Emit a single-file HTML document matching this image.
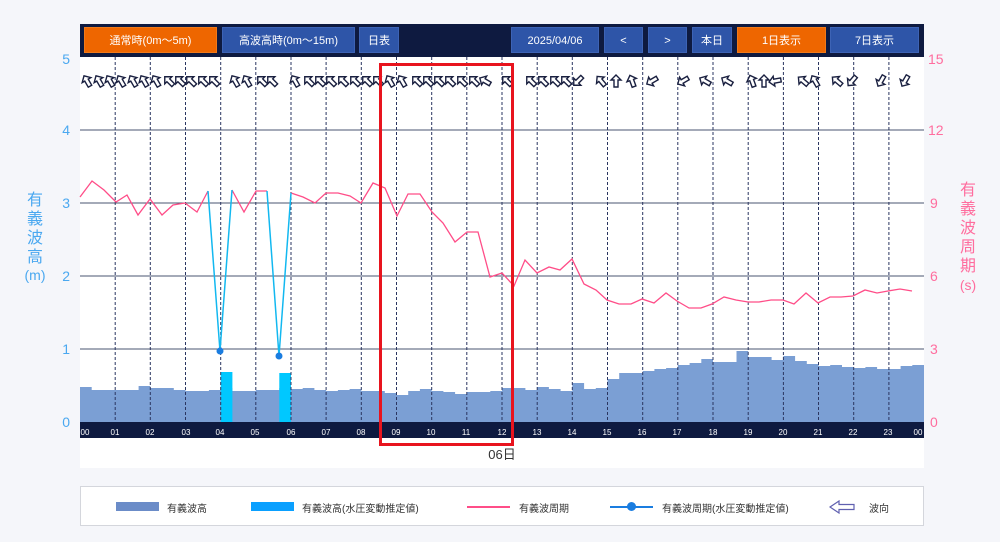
<!DOCTYPE html>
<html><head><meta charset="utf-8"><style>
*{margin:0;padding:0;box-sizing:border-box}
body{width:1000px;height:542px;background:#f5f6fa;position:relative;overflow:hidden;font-family:"Liberation Sans","Noto Sans CJK JP",sans-serif}
.bar{position:absolute;left:80px;top:24px;width:844px;height:33px;background:#0e1a40}
.b{position:absolute;top:3px;height:26px;background:#2e55a8;color:#fff;font-size:11px;line-height:26px;text-align:center;border:1px solid #3d63b5}
.o{background:#ee6600;border-color:#f07a1a}
.lg{position:absolute;left:80px;top:486px;width:844px;height:40px;background:#fff;border:1px solid #d4d6dc}
.lg span{position:absolute;top:13px;font-size:10px;color:#333}
</style></head><body>
<svg width="1000" height="542" style="position:absolute;left:0;top:0" font-family="Liberation Sans, Noto Sans CJK JP, sans-serif">
<defs><symbol id="a" viewBox="-7 -7 14 14" overflow="visible"><path d="M0 -6 L5 -1 L2 -1 L2 6 L-2 6 L-2 -1 L-5 -1 Z" fill="#fff" stroke="#1a2040" stroke-width="1.4"/></symbol></defs>
<rect x="80" y="57" width="844" height="411" fill="#fff"/>
<path d="M80 422 V387 H91.7 V390 H138.6 V386 H150.3 V388 H173.8 V390 H185.5 V391 H208.9 V390 H220.7 V388 H232.4 V391 H255.8 V390 H279.3 V388 H291 V389 H302.7 V388 H314.4 V390 H326.1 V391 H337.9 V390 H349.6 V389 H361.3 V391 H384.8 V393 H396.5 V395 H408.2 V391 H419.9 V389 H431.7 V391 H443.4 V392 H455.1 V394 H466.8 V392 H490.3 V391 H502 V388 H525.4 V390 H537.2 V387 H548.9 V389 H560.6 V391 H572.3 V383 H584.1 V389 H595.8 V388 H607.5 V379 H619.2 V373 H642.7 V371 H654.4 V369 H666.1 V368 H677.8 V365 H689.6 V363 H701.3 V359 H713 V362 H736.5 V351 H748.2 V357 H771.6 V360 H783.4 V356 H795.1 V361 H806.8 V364 H818.5 V366 H830.2 V365 H842 V367 H853.7 V368 H865.4 V367 H877.1 V369 H900.6 V366 H912.3 V365 H924 V422 Z" fill="#7b9fd4"/>
<rect x="220.7" y="372" width="11.7" height="50" fill="#00c8ff"/>
<rect x="279.3" y="373" width="11.7" height="49" fill="#00c8ff"/>
<g stroke="#4a5570" stroke-width="1">
<line x1="80" y1="130" x2="924" y2="130"/><line x1="80" y1="203" x2="924" y2="203"/><line x1="80" y1="276" x2="924" y2="276"/><line x1="80" y1="349" x2="924" y2="349"/>
</g>
<g stroke="#2a3560" stroke-width="1" stroke-dasharray="3,2">
<line x1="115.2" y1="57" x2="115.2" y2="422"/><line x1="150.3" y1="57" x2="150.3" y2="422"/><line x1="185.5" y1="57" x2="185.5" y2="422"/><line x1="220.7" y1="57" x2="220.7" y2="422"/><line x1="255.8" y1="57" x2="255.8" y2="422"/><line x1="291" y1="57" x2="291" y2="422"/><line x1="326.1" y1="57" x2="326.1" y2="422"/><line x1="361.3" y1="57" x2="361.3" y2="422"/><line x1="396.5" y1="57" x2="396.5" y2="422"/><line x1="431.7" y1="57" x2="431.7" y2="422"/><line x1="466.8" y1="57" x2="466.8" y2="422"/><line x1="502" y1="57" x2="502" y2="422"/><line x1="537.2" y1="57" x2="537.2" y2="422"/><line x1="572.3" y1="57" x2="572.3" y2="422"/><line x1="607.5" y1="57" x2="607.5" y2="422"/><line x1="642.7" y1="57" x2="642.7" y2="422"/><line x1="677.8" y1="57" x2="677.8" y2="422"/><line x1="713" y1="57" x2="713" y2="422"/><line x1="748.2" y1="57" x2="748.2" y2="422"/><line x1="783.4" y1="57" x2="783.4" y2="422"/><line x1="818.5" y1="57" x2="818.5" y2="422"/><line x1="853.7" y1="57" x2="853.7" y2="422"/><line x1="888.9" y1="57" x2="888.9" y2="422"/>
</g>
<polyline fill="none" stroke="#ff4d88" stroke-width="1.3" points="80,197 92,181 104,190 116,202 127,195 138,215 150,199 162,215 173,205 185,203 197,212 208,191"/>
<polyline fill="none" stroke="#ff4d88" stroke-width="1.3" points="232,190 244,212 256,191 267,191"/>
<polyline fill="none" stroke="#ff4d88" stroke-width="1.3" points="291,193 303,197 315,203 326,193 338,193 350,196 361,203 373,183 385,188 397,216 408,194 420,194 432,212 443,223 455,242 467,232 478,232 490,277 502,273 514,286 525,260 537,273 549,267 560,270 572,259 584,284 596,290 607,300 619,304 631,304 642,299 654,303 666,293 677,301 689,308 701,308 712,304 724,297 736,300 748,302 759,302 771,300 783,300 794,304 806,293 818,303 830,297 841,297 853,296 865,290 877,293 888,291 900,289 912,291"/>
<polyline fill="none" stroke="#12b8f0" stroke-width="1.5" points="208,191 220,351 232,190"/>
<polyline fill="none" stroke="#12b8f0" stroke-width="1.5" points="267,191 279,356 291,193"/>
<circle cx="220" cy="351" r="3.5" fill="#1a7de0"/><circle cx="279" cy="356" r="3.5" fill="#1a7de0"/>
<g>
<use href="#a" x="80" y="74" width="14" height="14" transform="rotate(-30 87 81)"/>
<use href="#a" x="92" y="74" width="14" height="14" transform="rotate(-30 99 81)"/>
<use href="#a" x="103" y="74" width="14" height="14" transform="rotate(-30 110 81)"/>
<use href="#a" x="114" y="74" width="14" height="14" transform="rotate(-30 121 81)"/>
<use href="#a" x="126" y="74" width="14" height="14" transform="rotate(-30 133 81)"/>
<use href="#a" x="137" y="74" width="14" height="14" transform="rotate(-30 144 81)"/>
<use href="#a" x="149" y="74" width="14" height="14" transform="rotate(-30 156 81)"/>
<use href="#a" x="162" y="74" width="14" height="14" transform="rotate(-45 169 81)"/>
<use href="#a" x="173" y="74" width="14" height="14" transform="rotate(-45 180 81)"/>
<use href="#a" x="184" y="74" width="14" height="14" transform="rotate(-45 191 81)"/>
<use href="#a" x="196" y="74" width="14" height="14" transform="rotate(-45 203 81)"/>
<use href="#a" x="207" y="74" width="14" height="14" transform="rotate(-45 214 81)"/>
<use href="#a" x="228" y="74" width="14" height="14" transform="rotate(-30 235 81)"/>
<use href="#a" x="240" y="74" width="14" height="14" transform="rotate(-30 247 81)"/>
<use href="#a" x="255" y="74" width="14" height="14" transform="rotate(-45 262 81)"/>
<use href="#a" x="265" y="74" width="14" height="14" transform="rotate(-45 272 81)"/>
<use href="#a" x="288" y="74" width="14" height="14" transform="rotate(-30 295 81)"/>
<use href="#a" x="302" y="74" width="14" height="14" transform="rotate(-45 309 81)"/>
<use href="#a" x="313" y="74" width="14" height="14" transform="rotate(-45 320 81)"/>
<use href="#a" x="324" y="74" width="14" height="14" transform="rotate(-45 331 81)"/>
<use href="#a" x="336" y="74" width="14" height="14" transform="rotate(-45 343 81)"/>
<use href="#a" x="348" y="74" width="14" height="14" transform="rotate(-45 355 81)"/>
<use href="#a" x="360" y="74" width="14" height="14" transform="rotate(-45 367 81)"/>
<use href="#a" x="371" y="74" width="14" height="14" transform="rotate(-45 378 81)"/>
<use href="#a" x="383" y="74" width="14" height="14" transform="rotate(-30 390 81)"/>
<use href="#a" x="395" y="74" width="14" height="14" transform="rotate(-30 402 81)"/>
<use href="#a" x="410" y="74" width="14" height="14" transform="rotate(-45 417 81)"/>
<use href="#a" x="421" y="74" width="14" height="14" transform="rotate(-45 428 81)"/>
<use href="#a" x="432" y="74" width="14" height="14" transform="rotate(-45 439 81)"/>
<use href="#a" x="443" y="74" width="14" height="14" transform="rotate(-45 450 81)"/>
<use href="#a" x="455" y="74" width="14" height="14" transform="rotate(-45 462 81)"/>
<use href="#a" x="467" y="74" width="14" height="14" transform="rotate(-45 474 81)"/>
<use href="#a" x="478" y="74" width="14" height="14" transform="rotate(-60 485 81)"/>
<use href="#a" x="500" y="74" width="14" height="14" transform="rotate(-45 507 81)"/>
<use href="#a" x="524" y="74" width="14" height="14" transform="rotate(-45 531 81)"/>
<use href="#a" x="536" y="74" width="14" height="14" transform="rotate(-45 543 81)"/>
<use href="#a" x="548" y="74" width="14" height="14" transform="rotate(-45 555 81)"/>
<use href="#a" x="559" y="74" width="14" height="14" transform="rotate(-45 566 81)"/>
<use href="#a" x="571" y="74" width="14" height="14" transform="rotate(-135 578 81)"/>
<use href="#a" x="594" y="74" width="14" height="14" transform="rotate(-40 601 81)"/>
<use href="#a" x="609" y="74" width="14" height="14" transform="rotate(0 616 81)"/>
<use href="#a" x="625" y="74" width="14" height="14" transform="rotate(-20 632 81)"/>
<use href="#a" x="645" y="74" width="14" height="14" transform="rotate(-120 652 81)"/>
<use href="#a" x="676" y="74" width="14" height="14" transform="rotate(-120 683 81)"/>
<use href="#a" x="698" y="74" width="14" height="14" transform="rotate(-60 705 81)"/>
<use href="#a" x="720" y="74" width="14" height="14" transform="rotate(-60 727 81)"/>
<use href="#a" x="745" y="74" width="14" height="14" transform="rotate(-20 752 81)"/>
<use href="#a" x="757" y="74" width="14" height="14" transform="rotate(0 764 81)"/>
<use href="#a" x="768" y="74" width="14" height="14" transform="rotate(-100 775 81)"/>
<use href="#a" x="796" y="74" width="14" height="14" transform="rotate(-50 803 81)"/>
<use href="#a" x="808" y="74" width="14" height="14" transform="rotate(-30 815 81)"/>
<use href="#a" x="830" y="74" width="14" height="14" transform="rotate(-50 837 81)"/>
<use href="#a" x="845" y="74" width="14" height="14" transform="rotate(-140 852 81)"/>
<use href="#a" x="874" y="74" width="14" height="14" transform="rotate(-150 881 81)"/>
<use href="#a" x="898" y="74" width="14" height="14" transform="rotate(-150 905 81)"/>
</g>
<rect x="80" y="422" width="844" height="16" fill="#0e1a40"/>
<g fill="#fff" font-size="8" text-anchor="middle">
<text x="85" y="435">00</text><text x="115" y="435">01</text><text x="150" y="435">02</text><text x="186" y="435">03</text><text x="220" y="435">04</text><text x="255" y="435">05</text><text x="291" y="435">06</text><text x="326" y="435">07</text><text x="361" y="435">08</text><text x="396" y="435">09</text><text x="431" y="435">10</text><text x="466" y="435">11</text><text x="502" y="435">12</text><text x="537" y="435">13</text><text x="572" y="435">14</text><text x="607" y="435">15</text><text x="642" y="435">16</text><text x="677" y="435">17</text><text x="713" y="435">18</text><text x="748" y="435">19</text><text x="783" y="435">20</text><text x="818" y="435">21</text><text x="853" y="435">22</text><text x="888" y="435">23</text><text x="918" y="435">00</text>
</g>
<text x="502" y="459" font-size="13" fill="#333" text-anchor="middle">06日</text>
<g fill="#4aa8f0" font-size="14" text-anchor="end">
<text x="70" y="64">5</text><text x="70" y="135">4</text><text x="70" y="208">3</text><text x="70" y="281">2</text><text x="70" y="354">1</text><text x="70" y="427">0</text>
</g>
<g fill="#ff6d9e" font-size="14">
<text x="928" y="64">15</text><text x="928" y="135">12</text><text x="930" y="208">9</text><text x="930" y="281">6</text><text x="930" y="354">3</text><text x="930" y="427">0</text>
</g>
<g fill="#4aa8f0" font-size="16" text-anchor="middle">
<text x="35" y="205">有</text><text x="35" y="224">義</text><text x="35" y="243">波</text><text x="35" y="262">高</text><text x="35" y="280" font-size="14">(m)</text>
</g>
<g fill="#ff6d9e" font-size="16" text-anchor="middle">
<text x="968" y="195">有</text><text x="968" y="214">義</text><text x="968" y="233">波</text><text x="968" y="252">周</text><text x="968" y="271">期</text><text x="968" y="290" font-size="14">(s)</text>
</g>
<rect x="380.5" y="64.5" width="132" height="380" fill="none" stroke="#e8141e" stroke-width="3"/>
</svg>
<div class="bar">
<div class="b o" style="left:4px;width:133px">通常時(0m～5m)</div>
<div class="b" style="left:142px;width:133px">高波高時(0m～15m)</div>
<div class="b" style="left:279px;width:40px">日表</div>
<div class="b" style="left:431px;width:88px">2025/04/06</div>
<div class="b" style="left:524px;width:39px">&lt;</div>
<div class="b" style="left:568px;width:39px">&gt;</div>
<div class="b" style="left:612px;width:40px">本日</div>
<div class="b o" style="left:657px;width:89px">1日表示</div>
<div class="b" style="left:750px;width:89px">7日表示</div>
</div>
<div class="lg">
<div style="position:absolute;left:35px;top:15px;width:43px;height:9px;background:#6b8cc8"></div><span style="left:86px">有義波高</span>
<div style="position:absolute;left:170px;top:15px;width:43px;height:9px;background:#0aa0ff"></div><span style="left:221px">有義波高(水圧変動推定値)</span>
<div style="position:absolute;left:386px;top:19px;width:43px;height:1.5px;background:#ff4d88"></div><span style="left:438px">有義波周期</span>
<div style="position:absolute;left:529px;top:19px;width:43px;height:1.5px;background:#1a7de0"></div><div style="position:absolute;left:546px;top:15px;width:9px;height:9px;border-radius:50%;background:#1a7de0"></div><span style="left:581px">有義波周期(水圧変動推定値)</span>
<svg style="position:absolute;left:748px;top:12px" width="26" height="16"><path d="M1 8 L10 2 L10 5.5 L25 5.5 L25 10.5 L10 10.5 L10 14 Z" fill="#fff" stroke="#6060b0" stroke-width="1.2"/></svg><span style="left:788px">波向</span>
</div>
</body></html>
